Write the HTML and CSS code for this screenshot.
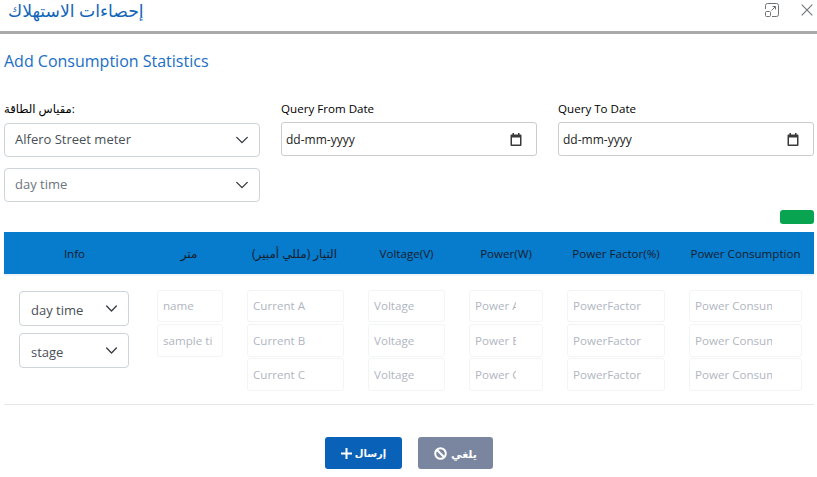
FILE: index.html
```html
<!DOCTYPE html>
<html lang="ar">
<head>
<meta charset="utf-8">
<title>إحصاءات الاستهلاك</title>
<link rel="stylesheet" href="styles.css">
</head>
<body>
<header class="modal-head">
  <h1 class="modal-title" dir="rtl">إحصاءات الاستهلاك</h1>
  <div class="modal-tools">
    <svg class="tool-expand" width="14" height="14" viewBox="0 0 14 14" fill="none" stroke="#6f7378" stroke-width="1"><path d="M.5 6V2.500a2 2 0 0 1 2-2h9a2 2 0 0 1 2 2v9a2 2 0 0 1-2 2H7M6.500 7.500l4-4M7.500 3.500h3v3"/><rect x=".5" y="8.500" width="5" height="5" rx="1"/></svg>
    <svg class="tool-close" width="12" height="12" viewBox="0 0 12 12" fill="none" stroke="#6f7378" stroke-width="1.100"><path d="M.7.700l10.600 10.600M11.300.700.700 11.300"/></svg>
  </div>
</header>
<main class="modal-body">
  <h2 class="form-title">Add Consumption Statistics</h2>
  <section class="filters">
    <div class="field">
      <label class="label label-ar">مقياس الطاقة:</label>
      <select class="select select-wide"><option>Alfero Street meter</option></select>
      <select class="select select-wide select-muted"><option>day time</option></select>
    </div>
    <div class="field">
      <label class="label">Query From Date</label>
      <div class="date"><span>dd-mm-yyyy</span>
        <svg width="12" height="13" viewBox="0 0 12 13"><path fill="#3a3a3a" d="M2.500 0h1.500v1.500h4V0h1.500v1.500h1A1 1 0 0 1 11.500 2.500v9.500a1 1 0 0 1-1 1h-9a1 1 0 0 1-1-1V2.500a1 1 0 0 1 1-1h1zM2 4.500V11.500h8V4.500z"/></svg>
      </div>
    </div>
    <div class="field">
      <label class="label">Query To Date</label>
      <div class="date"><span>dd-mm-yyyy</span>
        <svg width="12" height="13" viewBox="0 0 12 13"><path fill="#3a3a3a" d="M2.500 0h1.500v1.500h4V0h1.500v1.500h1A1 1 0 0 1 11.500 2.500v9.500a1 1 0 0 1-1 1h-9a1 1 0 0 1-1-1V2.500a1 1 0 0 1 1-1h1zM2 4.500V11.500h8V4.500z"/></svg>
      </div>
    </div>
  </section>
  <div class="add-row"><span class="add-pill"></span></div>
  <section class="table">
    <div class="table-head">
      <div>Info</div><div class="head-ar">متر</div><div class="head-ar">التيار (مللي أمبير)</div><div>Voltage(V)</div><div>Power(W)</div><div>Power Factor(%)</div><div>Power Consumption</div>
    </div>
    <div class="table-row">
      <div class="cell cell-info">
        <select class="select select-small"><option>day time</option></select>
        <select class="select select-small"><option>stage</option></select>
      </div>
      <div class="cell cell-meter">
        <input class="input" placeholder="name">
        <input class="input" placeholder="sample time">
      </div>
      <div class="cell">
        <input class="input" placeholder="Current A">
        <input class="input" placeholder="Current B">
        <input class="input" placeholder="Current C">
      </div>
      <div class="cell">
        <input class="input" placeholder="Voltage">
        <input class="input" placeholder="Voltage">
        <input class="input" placeholder="Voltage">
      </div>
      <div class="cell">
        <input class="input" placeholder="Power A">
        <input class="input" placeholder="Power B">
        <input class="input" placeholder="Power C">
      </div>
      <div class="cell cell-factor">
        <input class="input" placeholder="PowerFactor">
        <input class="input" placeholder="PowerFactor">
        <input class="input" placeholder="PowerFactor">
      </div>
      <div class="cell cell-total">
        <input class="input" placeholder="Power Consumption">
        <input class="input" placeholder="Power Consumption">
        <input class="input" placeholder="Power Consumption">
      </div>
    </div>
  </section>
  <footer class="actions">
    <button class="btn btn-primary" dir="rtl"><span class="btn-text-send">إرسال</span>
      <svg width="11" height="11" viewBox="0 0 11 11"><path fill="#fff" d="M4.500 0h2v4.500H11v2H6.500V11h-2V6.500H0v-2h4.500z"/></svg>
    </button>
    <button class="btn btn-muted" dir="rtl"><span class="btn-text-cancel">يلغي</span>
      <svg width="13" height="13" viewBox="0 0 13 13" fill="none" stroke="#fff" stroke-width="2"><circle cx="6.500" cy="6.500" r="5.300"/><path d="M2.800 2.800l7.400 7.400"/></svg>
    </button>
  </footer>
</main>
</body>
</html>
```
FILE: styles.css
```css
* { box-sizing: border-box; }
html, body { margin: 0; padding: 0; }
body {
  width: 817px;
  height: 477px;
  overflow: hidden;
  background: #fff;
  color: #212529;
  font-family: "Open Sans", "Noto Sans", "DejaVu Sans", sans-serif;
  font-size: 12px;
}
.modal-head {
  height: 34px;
  border-bottom: 3px solid #a9a9a9;
  display: flex;
  justify-content: space-between;
  align-items: flex-start;
  padding: 3px 4px 0 8px;
}
.modal-title {
  margin: -6px 0 0;
  font-size: 17.200px;
  font-weight: 400;
  color: #1265b8;
  line-height: 28px;
}
.modal-tools { display: flex; gap: 22px; align-items: flex-start; }
.tool-close { margin-top: 1px; }
.modal-body { padding: 0 3px 0 4px; }
.form-title {
  margin: 16px 0 0;
  font-size: 16px;
  line-height: 22px;
  font-weight: 400;
  color: #1a6ec4;
}
.filters {
  display: grid;
  grid-template-columns: repeat(3, 256px);
  column-gap: 21px;
  margin-top: 28px;
}
.field { display: flex; flex-direction: column; }
.label {
  font-size: 11.600px;
  line-height: 18px;
  font-weight: 500;
  color: #000;
  margin-bottom: 5px;
  height: 17px;
}
.label-ar { margin-bottom: 6px; }
.select {
  appearance: none;
  -webkit-appearance: none;
  border: 1px solid #ced4da;
  border-radius: 4px;
  background: #fff url("data:image/svg+xml,%3Csvg xmlns='http://www.w3.org/2000/svg' viewBox='0 0 16 16'%3E%3Cpath fill='none' stroke='%23343a40' stroke-linecap='round' stroke-linejoin='round' stroke-width='1.600' d='M2 5l6 6 6-6'/%3E%3C/svg%3E") no-repeat;
  font-family: inherit;
  color: #495057;
  outline: none;
}
.select-wide {
  height: 34px;
  width: 256px;
  padding: 0 30px 3px 10px;
  font-size: 13px;
  background-position: right 10px center;
  background-size: 14px 14px;
  margin-bottom: 11px;
}
.select-muted { color: #6c757d; }
.date {
  height: 34px;
  width: 256px;
  border: 1px solid #ccc;
  border-radius: 3px;
  display: flex;
  align-items: center;
  justify-content: space-between;
  padding: 0 14px 0 4px;
  font-size: 12px;
  color: #222;
}
.add-row { display: flex; justify-content: flex-end; margin-top: -3px; }
.add-pill { width: 34px; height: 14px; border-radius: 3px; background: #08a44f; }
.table { margin-top: 8px; width: 810px; }
.table-head, .table-row {
  display: grid;
  grid-template-columns: 141px 90px 121px 101px 98px 122px 137px;
}
.table-head {
  height: 44px;
  background: #077bcc;
  border-bottom: 2px solid #eef4f8;
  align-items: center;
  text-align: center;
  font-size: 11.600px;
  font-weight: 500;
  color: #16202c;
  padding-top: 1px;
}
.head-ar { font-size: 12px; padding-right: 2px; }
.table-row {
  height: 129px;
  padding-top: 14px;
  border-bottom: 1px solid #e7e7e7;
}
.cell {
  display: flex;
  flex-direction: column;
  gap: 1px;
  padding: 0 12px;
}
.cell-info { padding: 1px 16px 0 15px; gap: 7px; }
.select-small {
  width: 110px;
  height: 35px;
  padding: 3px 28px 0 11px;
  font-size: 13px;
  background-position: right 10px top 10px;
  background-size: 13px 13px;
}
.input {
  width: 100%;
  height: 33px;
  border: 1px solid #f3f4f5;
  border-radius: 3px;
  padding: 0 26px 0 5px;
  font-family: inherit;
  font-size: 11.600px;
  background: #fff;
  outline: none;
}
.input:first-child { height: 32px; margin-bottom: 1px; padding-bottom: 1px; }
.cell-meter .input { padding-right: 10px; }
.cell-factor .input { padding-right: 20px; }
.cell-total .input { padding-right: 29px; }
.input::placeholder { color: #b0b6bf; opacity: 1; }
.actions {
  display: flex;
  justify-content: center;
  gap: 16px;
  margin-top: 32px;
}
.btn {
  height: 32px;
  border: 0;
  border-radius: 3px;
  color: #fff;
  font-family: inherit;
  font-weight: 700;
  display: flex;
  align-items: center;
  justify-content: center;
  gap: 4px;
}
.btn-text-send { font-size: 10px; }
.btn-text-cancel { font-size: 11px; }
.btn-primary { width: 77px; gap: 3px; background: #0a62b8; }
.btn-muted { width: 75px; background: #7a86a0; }
```
